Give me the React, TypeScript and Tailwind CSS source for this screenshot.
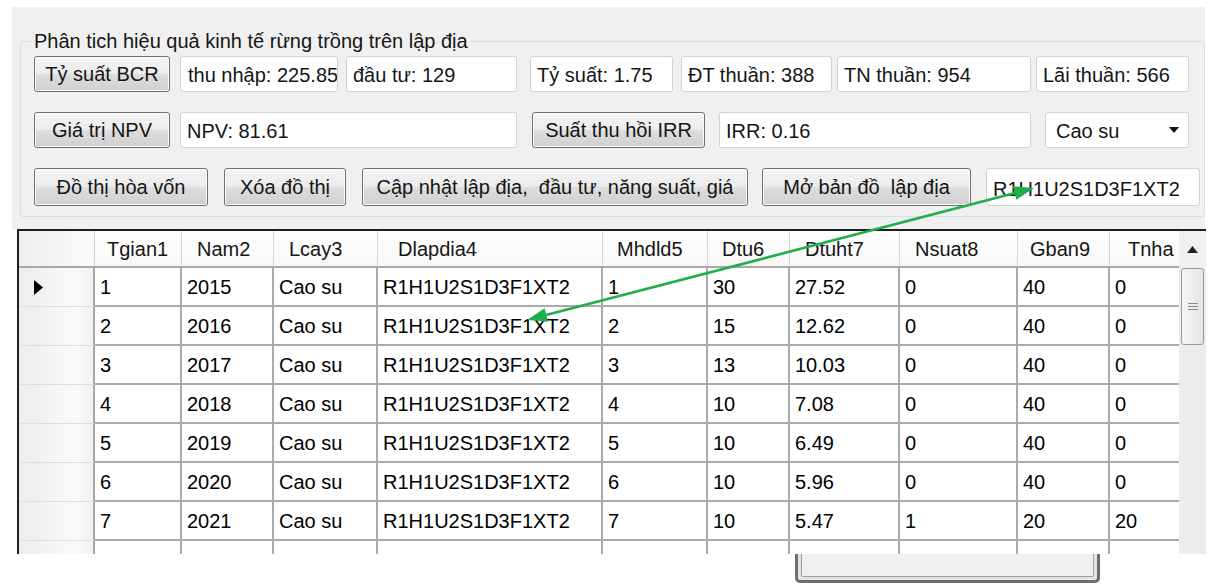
import React from 'react';

const BTN =
  'h-full shrink-0 rounded-[3px] border border-[#707070] bg-[linear-gradient(to_bottom,#f4f4f4_0%,#ececec_48%,#dddddd_52%,#d0d0d0_100%)] shadow-[inset_0_0_0_1px_#fbfbfb] flex items-center justify-center whitespace-nowrap';
const TB =
  'h-full shrink-0 rounded-[3px] border border-[#d2d2d2] bg-white flex items-start pt-[3px] pl-[6px] whitespace-nowrap overflow-hidden';

const COLS = [
  { name: 'Tgian1', w: 'w-[87px]', pl: 'pl-[12px]' },
  { name: 'Nam2', w: 'w-[92px]', pl: 'pl-[15px]' },
  { name: 'Lcay3', w: 'w-[104px]', pl: 'pl-[15px]' },
  { name: 'Dlapdia4', w: 'w-[225px]', pl: 'pl-[20px]' },
  { name: 'Mhdld5', w: 'w-[105px]', pl: 'pl-[14px]' },
  { name: 'Dtu6', w: 'w-[82px]', pl: 'pl-[14px]' },
  { name: 'Dtuht7', w: 'w-[110px]', pl: 'pl-[15px]' },
  { name: 'Nsuat8', w: 'w-[118px]', pl: 'pl-[15px]' },
  { name: 'Gban9', w: 'w-[92px]', pl: 'pl-[12px]' },
  { name: 'Tnha', w: 'w-[90px]', pl: 'pl-[18px]' },
];

const LD = 'R1H1U2S1D3F1XT2';
const ROWS: string[][] = [
  ['1', '2015', 'Cao su', LD, '1', '30', '27.52', '0', '40', '0'],
  ['2', '2016', 'Cao su', LD, '2', '15', '12.62', '0', '40', '0'],
  ['3', '2017', 'Cao su', LD, '3', '13', '10.03', '0', '40', '0'],
  ['4', '2018', 'Cao su', LD, '4', '10', '7.08', '0', '40', '0'],
  ['5', '2019', 'Cao su', LD, '5', '10', '6.49', '0', '40', '0'],
  ['6', '2020', 'Cao su', LD, '6', '10', '5.96', '0', '40', '0'],
  ['7', '2021', 'Cao su', LD, '7', '10', '5.47', '1', '20', '20'],
  ['', '', '', '', '', '', '', '', '', ''],
];

const GreenArrow = () => (
  <svg className="absolute left-0 top-0 pointer-events-none" width="1214" height="588" viewBox="0 0 1214 588">
    <line x1="1015" y1="193" x2="546" y2="315" stroke="#1eae4c" strokeWidth="2.6" />
    <polygon points="1034,188 1016.4,199.8 1012.9,186.3" fill="#1eae4c" />
    <polygon points="527,320 548.1,321.7 544.6,308.2" fill="#1eae4c" />
  </svg>
);

export default function App() {
  return (
    <div className="relative w-[1214px] h-[588px] overflow-hidden bg-white font-['Liberation_Sans',Arial,sans-serif] text-[20px] text-[#151515]">
      {/* top panel */}
      <div className="ml-[12px] mt-[7px] w-[1193px] h-[222px] bg-[#f0f0f0] pt-[24px] pl-[8px]">
        <fieldset className="w-[1185px] h-[186px] rounded-[3px] border border-[#d5dfe5] pt-[5px]">
          <legend className="ml-[10px] px-[3px] leading-[20px]">Phân tich hiệu quả kinh tế rừng trồng trên lập địa</legend>

          <div className="flex h-[36px] pl-[13px]">
            <div className={`${BTN} w-[136px]`}>Tỷ suất BCR</div>
            <div className={`${TB} w-[158px] ml-[10px] pl-[7px]`}>thu nhập: 225.85</div>
            <div className={`${TB} w-[171px] ml-[8px]`}>đầu tư: 129</div>
            <div className={`${TB} w-[143px] ml-[13px]`}>Tỷ suất: 1.75</div>
            <div className={`${TB} w-[151px] ml-[8px]`}>ĐT thuần: 388</div>
            <div className={`${TB} w-[194px] ml-[5px]`}>TN thuần: 954</div>
            <div className={`${TB} w-[153px] ml-[5px]`}>Lãi thuần: 566</div>
          </div>

          <div className="flex h-[36px] mt-[20px] pl-[13px]">
            <div className={`${BTN} w-[136px]`}>Giá trị NPV</div>
            <div className={`${TB} w-[337px] ml-[10px]`}>NPV: 81.61</div>
            <div className={`${BTN} w-[173px] ml-[15px]`}>Suất thu hồi IRR</div>
            <div className={`${TB} w-[312px] ml-[14px]`}>IRR: 0.16</div>
            <div className={`${TB} w-[144px] ml-[14px] pl-[10px] pr-[9px] justify-between`}>
              <span>Cao su</span>
              <svg width="10" height="6" viewBox="0 0 10 6" className="mt-[11px]">
                <polygon points="0,0 10,0 5,6" fill="#111" />
              </svg>
            </div>
          </div>

          <div className="flex h-[38px] mt-[20px] pl-[13px]">
            <div className={`${BTN} w-[174px]`}>Đồ thị hòa vốn</div>
            <div className={`${BTN} w-[122px] ml-[16px]`}>Xóa đồ thị</div>
            <div className={`${BTN} w-[386px] ml-[16px]`}>Cập nhật lập địa,&nbsp; đầu tư, năng suất, giá</div>
            <div className={`${BTN} w-[209px] ml-[14px]`}>Mở bản đồ&nbsp; lập địa</div>
            <div className={`${TB} w-[214px] ml-[15px] pt-[5px]`}>{LD}</div>
          </div>
        </fieldset>
      </div>

      {/* data grid */}
      <div className="ml-[17px] w-[1189px] h-[325px] flex border-l-2 border-t-2 border-[#1e1e1e] overflow-hidden">
        <div className="flex-1 overflow-hidden bg-white">
          <div className="flex h-[37px] border-b-2 border-[#a8a8a8]">
            <div className="w-[76px] shrink-0 h-full border-r border-[#cfcfcf] bg-[linear-gradient(to_right,#eeeeee,#fbfbfb)]" />
            {COLS.map((c) => (
              <div
                key={c.name}
                className={`${c.w} ${c.pl} shrink-0 h-full flex items-center border-r border-[#d6d6d6] bg-[linear-gradient(to_bottom,#ffffff,#f7f7f7)] whitespace-nowrap`}
              >
                {c.name}
              </div>
            ))}
          </div>
          {ROWS.map((r, i) => (
            <div key={i} className="flex h-[39px]">
              <div className="w-[76px] shrink-0 h-full flex items-center pl-[15px] border-r-2 border-b border-r-[#a8a8a8] border-b-[#dedede] bg-[linear-gradient(to_right,#ececec,#fafafa_75%,#f2f2f2)]">
                {i === 0 && (
                  <svg width="9" height="15" viewBox="0 0 9 15">
                    <polygon points="0,0 9,7.5 0,15" fill="#000" />
                  </svg>
                )}
              </div>
              {COLS.map((c, j) => (
                <div
                  key={c.name}
                  className={`${c.w} shrink-0 h-full flex items-center pl-[5px] border-r-2 border-b-2 border-[#ababab] whitespace-nowrap overflow-hidden text-black`}
                >
                  {r[j]}
                </div>
              ))}
            </div>
          ))}
        </div>
        {/* vertical scrollbar */}
        <div className="w-[27px] shrink-0 bg-[#ececec] flex flex-col">
          <div className="h-[37px] flex items-center justify-center bg-[#f0f0f0]">
            <svg width="11" height="7" viewBox="0 0 11 7">
              <polygon points="0,7 11,7 5.5,0" fill="#222" />
            </svg>
          </div>
          <div className="mx-[2px] h-[77px] rounded-[3px] border border-[#9a9a9a] bg-[linear-gradient(to_right,#f6f6f6,#e4e4e4)] flex flex-col items-center justify-center gap-[2px]">
            <div className="w-[10px] h-[1px] bg-[#8a8a8a]" />
            <div className="w-[10px] h-[1px] bg-[#8a8a8a]" />
            <div className="w-[10px] h-[1px] bg-[#8a8a8a]" />
          </div>
        </div>
      </div>

      {/* partial frame below the grid */}
      <div className="ml-[795px] w-[305px] h-[29px] rounded-b-[5px] border-x-[3px] border-b-[3px] border-[#6e6e6e] bg-[#e4e4e4] px-[3px] pb-[3px]">
        <div className="h-full rounded-b-[2px] border-x border-b border-[#a0a0a0] bg-[#f0f0f0]" />
      </div>

      <GreenArrow />
    </div>
  );
}
